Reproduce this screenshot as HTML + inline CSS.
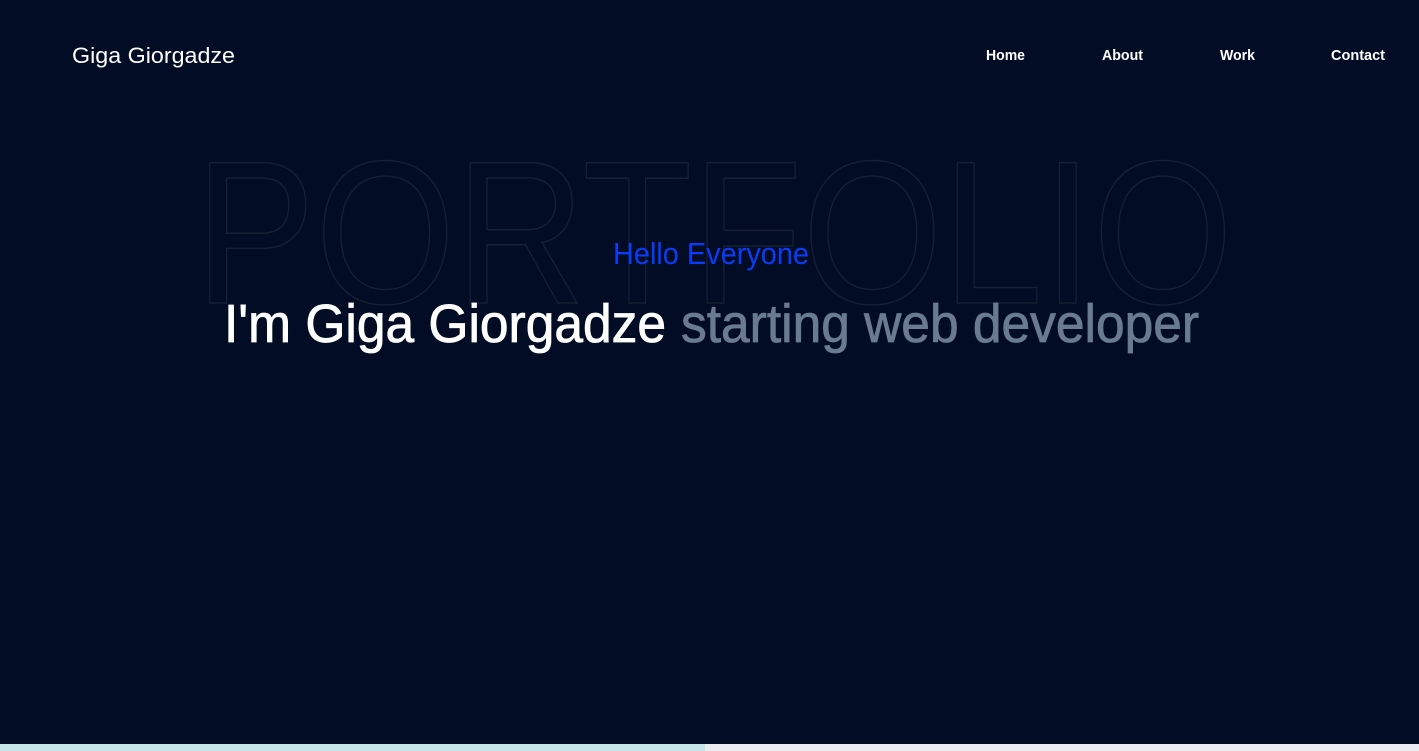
<!DOCTYPE html>
<html><head><meta charset="utf-8"><style>
html,body{margin:0;padding:0;width:1419px;height:751px;overflow:hidden;background:#020c25}
svg{display:block}
text{font-family:"Liberation Sans",sans-serif}
</style></head><body>
<svg width="1419" height="751" viewBox="0 0 1419 751">
<rect width="1419" height="751" fill="#020c25"/>
<text x="195" y="303" font-size="204" textLength="1038" lengthAdjust="spacingAndGlyphs" fill="none" stroke="#171f35" stroke-width="1.5">PORTFOLIO</text>
<text x="72" y="63" font-size="22" fill="#fff" textLength="163" lengthAdjust="spacingAndGlyphs">Giga Giorgadze</text>
<g font-size="15" font-weight="bold" fill="#fff">
<text x="986" y="60" textLength="39" lengthAdjust="spacingAndGlyphs">Home</text>
<text x="1102" y="60" textLength="41" lengthAdjust="spacingAndGlyphs">About</text>
<text x="1220" y="60" textLength="35" lengthAdjust="spacingAndGlyphs">Work</text>
<text x="1331" y="60" textLength="54" lengthAdjust="spacingAndGlyphs">Contact</text>
</g>
<text x="613" y="264" font-size="31" fill="#0a3cf5" textLength="196" lengthAdjust="spacingAndGlyphs">Hello Everyone</text>
<text x="224" y="342" font-size="54" fill="#fff" stroke="#fff" stroke-width="0.8" textLength="442" lengthAdjust="spacingAndGlyphs">I'm Giga Giorgadze</text>
<text x="681" y="342" font-size="54" fill="#6a7a90" stroke="#6a7a90" stroke-width="0.8" textLength="518" lengthAdjust="spacingAndGlyphs">starting web developer</text>
<rect x="0" y="744" width="705" height="7" fill="#c5e5e8"/>
<rect x="705" y="744" width="714" height="7" fill="#ebedf0"/>
</svg>
</body></html>
